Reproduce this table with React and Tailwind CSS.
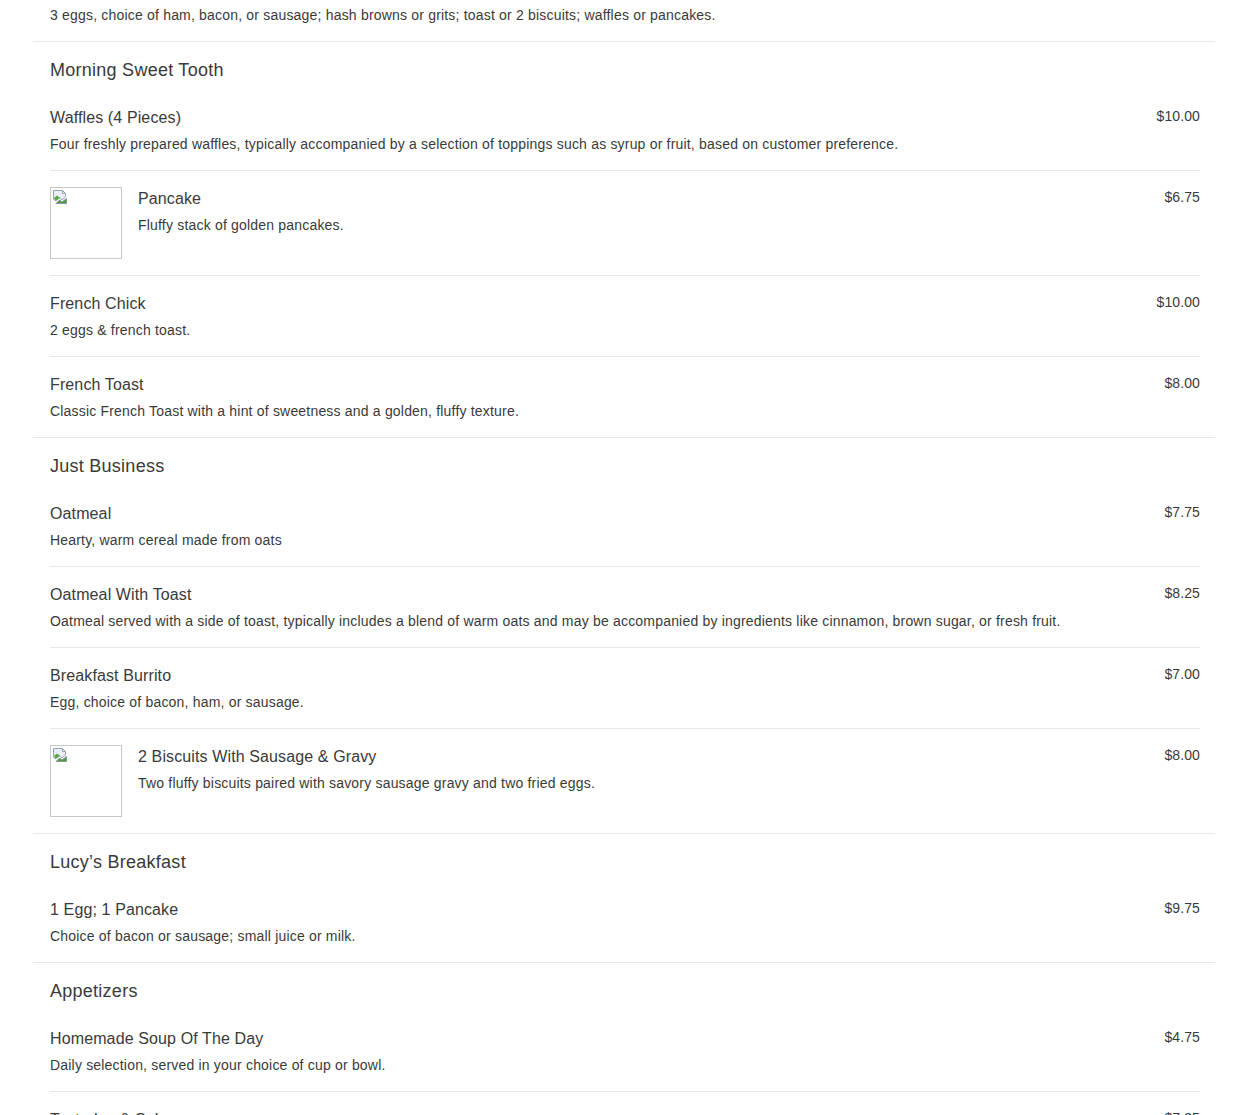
import React from "react";

const sections = [
  {
    title: "Morning Sweet Tooth",
    items: [
      { name: "Waffles (4 Pieces)", desc: "Four freshly prepared waffles, typically accompanied by a selection of toppings such as syrup or fruit, based on customer preference.", price: "$10.00" },
      { name: "Pancake", desc: "Fluffy stack of golden pancakes.", price: "$6.75", img: true },
      { name: "French Chick", desc: "2 eggs & french toast.", price: "$10.00" },
      { name: "French Toast", desc: "Classic French Toast with a hint of sweetness and a golden, fluffy texture.", price: "$8.00" },
    ],
  },
  {
    title: "Just Business",
    items: [
      { name: "Oatmeal", desc: "Hearty, warm cereal made from oats", price: "$7.75" },
      { name: "Oatmeal With Toast", desc: "Oatmeal served with a side of toast, typically includes a blend of warm oats and may be accompanied by ingredients like cinnamon, brown sugar, or fresh fruit.", price: "$8.25" },
      { name: "Breakfast Burrito", desc: "Egg, choice of bacon, ham, or sausage.", price: "$7.00" },
      { name: "2 Biscuits With Sausage & Gravy", desc: "Two fluffy biscuits paired with savory sausage gravy and two fried eggs.", price: "$8.00", img: true },
    ],
  },
  {
    title: "Lucy\u2019s Breakfast",
    items: [
      { name: "1 Egg; 1 Pancake", desc: "Choice of bacon or sausage; small juice or milk.", price: "$9.75" },
    ],
  },
  {
    title: "Appetizers",
    items: [
      { name: "Homemade Soup Of The Day", desc: "Daily selection, served in your choice of cup or bowl.", price: "$4.75" },
      { name: "Tostadas & Salsa", desc: "Crispy tostadas served with fresh salsa.", price: "$7.25" },
    ],
  },
];

function BrokenImg() {
  return (
    <div className="w-[72px] h-[72px] shrink-0 border border-[#c8c8c8] relative bg-white">
      <svg className="absolute left-[1px] top-[1px]" width="16" height="16" viewBox="0 0 16 16">
        <path d="M1.5 1.5 H10.5 L13.5 4.5 V8 L10 11 L7 8.5 L3.5 12 L1.5 10 Z" fill="#e8eef6" stroke="#9aa3ad" strokeWidth="1" />
        <path d="M2 9 L5 6.5 L8 9 L3.5 12 Z" fill="#5aa64a" />
        <path d="M10.5 1.5 V4.5 H13.5" fill="none" stroke="#9aa3ad" strokeWidth="1" />
        <path d="M4 14.5 L7.5 11 L10 13 L14.5 9.5 V14.5 Z" fill="#4a9a3e" stroke="#8c959e" strokeWidth="1" />
      </svg>
    </div>
  );
}

function Item({ item, first }) {
  return (
    <div className={"flex pt-4 pb-4 " + (first ? "" : "border-t border-[#e8e8e8]")}>
      {item.img && (
        <div className="mr-4">
          <BrokenImg />
        </div>
      )}
      <div className="flex-1 min-w-0 pt-[1px]">
        <div className="text-[16px] leading-[22px] text-[#3a3a3a] tracking-[0.12px]">{item.name}</div>
        <div className="mt-[5px] text-[14px] leading-[20px] text-[#3a3a3a] tracking-[0.19px]">{item.desc}</div>
      </div>
      <div className="ml-4 text-[14px] leading-[20px] text-[#3a3a3a] text-right tracking-[0.1px]">{item.price}</div>
    </div>
  );
}

export default function App() {
  return (
    <div className="bg-white h-[1115px] overflow-hidden" style={{ fontFamily: '"Liberation Sans", Arial, sans-serif' }}>
      <div className="ml-[33px] w-[1182px]">
        <div className="pl-[17px] pr-[15px] pt-[5px] pb-[16px] text-[14px] leading-[20px] text-[#3a3a3a] tracking-[0.19px]">
          3 eggs, choice of ham, bacon, or sausage; hash browns or grits; toast or 2 biscuits; waffles or pancakes.
        </div>
        {sections.map((s) => (
          <div key={s.title} className="border-t border-[#e8e8e8]">
            <div className="pl-[17px] pr-[15px] pt-[17px] pb-[9px] text-[18px] leading-[22px] text-[#3a3a3a] tracking-[0.26px]">{s.title}</div>
            <div className="pl-[17px] pr-[15px]">
              {s.items.map((it, i) => (
                <Item key={it.name} item={it} first={i === 0} />
              ))}
            </div>
          </div>
        ))}
      </div>
    </div>
  );
}
